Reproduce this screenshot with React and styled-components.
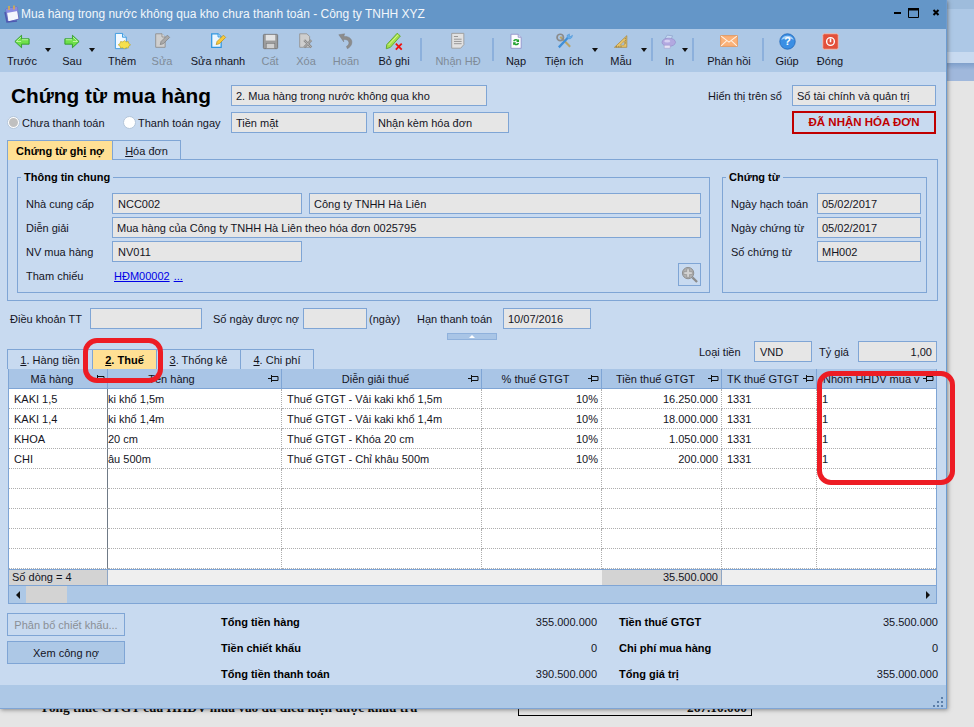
import React from "react";
import styled, { createGlobalStyle } from "styled-components";

const GlobalStyle = createGlobalStyle`
  html, body {
    margin: 0;
    padding: 0;
    background: #e5e5e5;
    overflow: hidden;
  }
  * {
    box-sizing: border-box;
  }
`;

const line = "#7fa5d5";

const Page = styled.div`
  position: relative;
  width: 974px;
  height: 727px;
  overflow: hidden;
  font-family: "Liberation Sans", Arial, sans-serif;
  font-size: 11px;
  color: #14141e;
`;

const Desktop = styled.div`
  display: flex;
  height: 709px;
`;

const Window = styled.div`
  width: 947px;
  height: 709px;
  flex: none;
  display: flex;
  flex-direction: column;
  background: #c8daf0;
  border-right: 1px solid #6c9bd0;
  border-bottom: 1px solid ${line};
  box-shadow: 1px 1px 4px rgba(60, 60, 60, 0.55);
  position: relative;
  z-index: 1;
`;

const SideStrip = styled.div`
  flex: 1;
  display: flex;
  flex-direction: column;
`;

const Strip = styled.div`
  height: ${(p) => p.$h}px;
  background: ${(p) => p.$bg};
`;

const TitleBar = styled.div`
  height: 29px;
  flex: none;
  background: #6496c8;
  display: flex;
  align-items: center;
  padding: 0 6px 1px 3px;
  color: #f2f6fb;
  font-size: 12px;
`;

const TitleText = styled.span`
  flex: 1;
`;

const Toolbar = styled.div`
  height: 43px;
  flex: none;
  background: #adc8e6;
  display: flex;
  padding-left: 4px;
`;

const Tool = styled.div`
  width: ${(p) => p.$w}px;
  margin-left: ${(p) => p.$ml || 0}px;
  flex: none;
  display: flex;
  flex-direction: column;
  align-items: center;
  white-space: nowrap;
  color: ${(p) => (p.$off ? "#7f8b98" : "#14141e")};
`;

const ToolIcon = styled.div`
  height: 24px;
  display: flex;
  align-items: center;
  justify-content: center;
  svg {
    display: block;
  }
`;

const ToolLabel = styled.div`
  line-height: 14px;
  margin-top: 1px;
`;

const Caret = styled.div`
  width: ${(p) => p.$w}px;
  margin-left: ${(p) => p.$ml || 0}px;
  flex: none;
  display: flex;
  justify-content: center;
  padding-top: 19px;
  &::after {
    content: "";
    flex: none;
    width: 0;
    height: 0;
    border-left: 3.5px solid transparent;
    border-right: 3.5px solid transparent;
    border-top: 4px solid #111;
  }
`;

const ToolSep = styled.div`
  width: 2px;
  height: 23px;
  margin-top: 9px;
  margin-left: ${(p) => p.$ml || 0}px;
  flex: none;
  background: #8cb0dc;
`;

const Head = styled.div`
  height: 68px;
  flex: none;
  padding: 13px 10px 0 7px;
  display: flex;
  flex-direction: column;
  gap: 6px;
`;

const HeadRow = styled.div`
  display: flex;
  align-items: center;
  height: 21px;
`;

const DocTitle = styled.h1`
  width: 224px;
  flex: none;
  margin: 0;
  padding-left: 4px;
  font-size: 20.8px;
  line-height: 21px;
  font-weight: 700;
  color: #000;
  white-space: nowrap;
`;

const Radios = styled.div`
  width: 224px;
  flex: none;
  display: flex;
  align-items: center;
`;

const RadioItem = styled.label`
  display: flex;
  align-items: center;
  gap: 2px;
  width: ${(p) => p.$w}px;
  flex: none;
  white-space: nowrap;
`;

const RadioDot = styled.span`
  width: 13px;
  height: 13px;
  border-radius: 50%;
  flex: none;
  background: #fff;
  border: 1px solid #b4c6da;
  display: flex;
  align-items: center;
  justify-content: center;
  &::after {
    content: "";
    display: ${(p) => (p.$on ? "block" : "none")};
    width: 9px;
    height: 9px;
    border-radius: 50%;
    background: #c0c0c0;
  }
`;

const Field = styled.div`
  width: ${(p) => (p.$w ? `${p.$w}px` : "auto")};
  height: 21px;
  flex: ${(p) => (p.$w ? "none" : "1")};
  margin-left: ${(p) => p.$ml || 0}px;
  background: #e6e6e6;
  border: 1px solid ${line};
  padding: 0 4px 0 ${(p) => p.$pl || 4}px;
  line-height: 20px;
  text-align: ${(p) => p.$align || "left"};
  white-space: nowrap;
  overflow: hidden;
`;

const Spacer = styled.div`
  flex: 1;
`;

const Text = styled.span`
  width: ${(p) => (p.$w ? `${p.$w}px` : "auto")};
  margin-left: ${(p) => p.$ml || 0}px;
  flex: none;
  white-space: nowrap;
`;

const Stamp = styled.div`
  width: 144px;
  height: 23px;
  flex: none;
  border: 2px solid #c00000;
  color: #c00000;
  font-weight: 700;
  text-align: center;
  line-height: 19px;
  font-size: 11.5px;
`;

const TabRow = styled.div`
  display: flex;
  padding-left: 7px;
  height: 20px;
  flex: none;
  position: relative;
  z-index: 1;
  margin-bottom: -1px;
`;

const Tab = styled.div`
  width: ${(p) => p.$w}px;
  flex: none;
  height: 20px;
  border: 1px solid ${line};
  border-left-width: ${(p) => (p.$first ? 1 : 0)}px;
  border-bottom: 0;
  background: ${(p) => (p.$on ? "#ffe094" : "transparent")};
  font-weight: ${(p) => (p.$on ? 700 : 400)};
  color: ${(p) => (p.$on ? "#000" : "#14141e")};
  text-align: center;
  line-height: 20px;
  white-space: nowrap;
`;

const Panel = styled.div`
  margin: 0 8px 0 7px;
  height: 142px;
  flex: none;
  border: 1px solid ${line};
  padding: 10px 10px 0 9px;
  display: flex;
  justify-content: space-between;
`;

const Group = styled.fieldset`
  width: ${(p) => p.$w}px;
  min-width: 0;
  min-inline-size: 0;
  height: 123px;
  margin: 0;
  padding: 9px 8px 0 8px;
  border: 1px solid ${line};
  flex: none;
  display: flex;
  flex-direction: column;
  gap: 3px;
`;

const GroupTitle = styled.legend`
  padding: 0 3px;
  margin-left: -5px;
  font-weight: 700;
  line-height: 14px;
  color: #000;
`;

const FormRow = styled.div`
  display: flex;
  align-items: center;
  height: 21px;
`;

const FormLabel = styled.span`
  width: ${(p) => p.$w}px;
  flex: none;
  white-space: nowrap;
`;

const RefLink = styled.a`
  margin-left: 2px;
  color: #0000e6;
  text-decoration: underline;
  margin-right: 2px;
  flex: none;
`;

const ZoomButton = styled.div`
  width: 23px;
  height: 23px;
  border: 1px solid ${line};
  margin-left: auto;
  margin-top: -2px;
  display: flex;
  align-items: center;
  justify-content: center;
`;

const TermsRow = styled.div`
  margin-top: 7px;
  height: 21px;
  flex: none;
  display: flex;
  align-items: center;
  padding-left: 10px;
`;

const Collapser = styled.div`
  width: 50px;
  height: 7px;
  flex: none;
  margin: 4px 0 1px 447px;
  background: #a9c5e6;
  border: 1px solid #8fb1dc;
  display: flex;
  align-items: center;
  justify-content: center;
  &::after {
    content: "";
    border-left: 3px solid transparent;
    border-right: 3px solid transparent;
    border-bottom: 3px solid #fff;
  }
`;

const GridTop = styled.div`
  height: 28px;
  flex: none;
  display: flex;
  align-items: flex-start;
  padding: 0 9px 0 7px;
`;

const GridTabs = styled.div`
  display: flex;
  margin-top: 8px;
`;

const Currency = styled.div`
  margin-left: auto;
  display: flex;
  align-items: center;
`;

const DataGrid = styled.div`
  margin: 0 9px 0 8px;
  height: 235px;
  flex: none;
  border-left: 1px solid ${line};
  border-right: 1px solid ${line};
  border-bottom: 1px solid ${line};
  display: flex;
  flex-direction: column;
`;

const columns = "99px 174px 200px 120px 120px 95px 1fr";

const HeaderRow = styled.div`
  display: grid;
  grid-template-columns: ${columns};
  height: 20px;
  flex: none;
  background: #a9c5e6;
  border-bottom: 1px solid ${line};
`;

const HeaderCell = styled.div`
  display: flex;
  align-items: center;
  justify-content: ${(p) => (p.$left ? "flex-start" : "center")};
  padding: ${(p) => (p.$left ? "1px 16px 0 6px" : `1px ${p.$pr || 12}px 0 0`)};
  border-right: 1px solid ${line};
  position: relative;
  white-space: nowrap;
  overflow: hidden;
  &:last-child {
    border-right: 0;
  }
`;

const PinMark = styled.svg`
  position: absolute;
  right: 2px;
  top: 5px;
`;

const Body = styled.div`
  height: 180px;
  flex: none;
  background: #fff;
  display: flex;
  flex-direction: column;
`;

const Row = styled.div`
  display: grid;
  grid-template-columns: ${columns};
  height: 20px;
  flex: none;
`;

const Cell = styled.div`
  height: 20px;
  padding: 1px ${(p) => (p.$clip ? "4px 0 0" : "3px 0 5px")};
  line-height: 18px;
  text-align: ${(p) => (p.$right ? "right" : "left")};
  border-bottom: 1px dotted #aeaeae;
  border-right: ${(p) => (p.$frozen ? "1px solid #6f7a86" : "1px dotted #aeaeae")};
  white-space: nowrap;
  overflow: hidden;
  &:last-child {
    border-right: 0;
  }
`;

const FooterRow = styled.div`
  display: grid;
  grid-template-columns: ${columns};
  height: 17px;
  flex: none;
  background: #efefef;
  border-top: 1px solid ${line};
  border-bottom: 1px solid ${line};
`;

const FooterCell = styled.div`
  background: ${(p) => (p.$sum ? "#d3d3d3" : "transparent")};
  border-right: 1px solid ${(p) => (p.$sum ? "#8fa6c4" : "transparent")};
  padding: 0 3px;
  line-height: 15px;
  text-align: ${(p) => (p.$right ? "right" : "left")};
  white-space: nowrap;
`;

const ScrollBar = styled.div`
  flex: 1;
  display: flex;
  align-items: center;
  background: #adc8e6;
`;

const ScrollArrow = styled.div`
  width: 17px;
  flex: none;
  display: flex;
  justify-content: center;
  &::after {
    content: "";
    border-top: 4px solid transparent;
    border-bottom: 4px solid transparent;
    ${(p) => (p.$right ? "border-left: 4px solid #111;" : "border-right: 4px solid #111;")}
  }
`;

const ScrollThumb = styled.div`
  width: 41px;
  height: 100%;
  flex: none;
  background: #d3d3d3;
`;

const Bottom = styled.div`
  height: 81px;
  flex: none;
  display: flex;
  padding: 9px 9px 0 7px;
`;

const ButtonColumn = styled.div`
  width: 118px;
  flex: none;
  display: flex;
  flex-direction: column;
  gap: 5px;
`;

const Button = styled.div`
  height: 23px;
  border: 1px solid ${line};
  background: ${(p) => (p.$off ? "transparent" : "#adc8e6")};
  color: ${(p) => (p.$off ? "#8a8f96" : "#14141e")};
  text-align: center;
  line-height: 22px;
  white-space: nowrap;
`;

const Summary = styled.div`
  margin: -4px 0 0 96px;
  display: grid;
  grid-template-columns: 376px 319px;
  grid-auto-rows: 26px;
  column-gap: 22px;
`;

const SummaryItem = styled.div`
  display: flex;
  align-items: center;
  justify-content: space-between;
  strong {
    color: #000;
  }
`;

const StatusBar = styled.div`
  flex: 1;
  background: #adc8e6;
  display: flex;
  justify-content: flex-end;
  align-items: flex-end;
  padding: 0 1px 0 0;
`;

const BehindWindow = styled.div`
  height: 18px;
  display: flex;
  overflow: hidden;
  font-family: "Liberation Serif", "Times New Roman", serif;
  font-size: 13.35px;
  color: #000;
`;

const BehindText = styled.div`
  margin: -9px 0 0 40px;
  width: 478px;
  flex: none;
  font-weight: 700;
  white-space: nowrap;
  line-height: 15px;
`;

const BehindBox = styled.div`
  width: 234px;
  height: 7px;
  flex: none;
  border: 1px solid #000;
  border-top: 0;
  text-align: right;
  padding-right: 4px;
  overflow: hidden;
`;

const BehindValue = styled.div`
  margin-top: -9px;
  line-height: 15px;
  font-weight: 700;
`;

const Annotation = styled.div`
  position: absolute;
  left: ${(p) => p.$x}px;
  top: ${(p) => p.$y}px;
  width: ${(p) => p.$w}px;
  height: ${(p) => p.$h}px;
  border: 5px solid #ed1c24;
  border-radius: 14px;
  z-index: 5;
`;

const AppIcon = () => (
  <svg width="18" height="20" viewBox="0 0 18 20">
    <path d="M3 5 L14 3 L16 15 L5 18 Z" fill="#f4f6fd" stroke="#6a6fc0" />
    <path d="M3 5 L14 3 L14.6 7 L3.7 9 Z" fill="#8a8ae0" />
    <path d="M6 2v4M11 1.5v4" stroke="#e0b040" strokeWidth="1.5" />
    <path d="M2 8 L4 18 L14 17" fill="none" stroke="#4f58b0" strokeWidth="1.5" />
  </svg>
);

const BackIcon = ({ flip }) => (
  <svg width="16" height="15" viewBox="0 0 18 16" style={flip ? { transform: "scaleX(-1)" } : undefined}>
    <path d="M8.5 1 L1 8 L8.5 15 L8.5 11 L17 11 L17 5 L8.5 5 Z" fill="#6fe04a" stroke="#2b9a24" strokeLinejoin="round" />
    <path d="M8 3 L2.6 8 L8 8 M9 6 L16 6" fill="none" stroke="#c4f7a8" />
  </svg>
);

const NewIcon = () => (
  <svg width="19" height="19" viewBox="0 0 20 20">
    <path d="M2.5 1.5 H10 L14 5.5 V17.5 H2.5 Z" fill="#f2f9ff" stroke="#3d9be0" />
    <path d="M10 1.5 V5.5 H14" fill="#bfe0fa" stroke="#3d9be0" />
    <path d="M12 9 L13.5 10.5 L16 10 L16.5 12 L18.5 13.5 L16.5 15 L16 17 L13.5 16.5 L12 18 L10.5 16.5 L8 17 L7.5 15 L5.5 13.5 L7.5 12 L8 10 L10.5 10.5 Z" fill="#f5e04c" stroke="#b9a32a" strokeWidth="0.7" />
  </svg>
);

const EditIcon = ({ off }) => (
  <svg width="18" height="18" viewBox="0 0 20 20">
    <path d="M3 2 H10 L13.5 5.5 V17 H3 Z" fill={off ? "#cfcfcf" : "#eaf6ff"} stroke={off ? "#8e8e8e" : "#2e95e0"} strokeWidth={off ? 1 : 1.4} />
    <path d="M10 2 V5.5 H13.5" fill={off ? "#e6e6e6" : "#bfe0fa"} stroke={off ? "#8e8e8e" : "#2e95e0"} />
    <path d="M8 14 L9 10.5 L16 3.5 L18.5 6 L11.5 13 Z" fill={off ? "#a9a9a9" : "#f7c93e"} stroke={off ? "#808080" : "#b98f1c"} strokeWidth="0.8" />
  </svg>
);

const SaveIcon = () => (
  <svg width="19" height="19" viewBox="0 0 20 20">
    <rect x="2.5" y="2.5" width="15" height="15" rx="1" fill="#9c9c9c" stroke="#777" />
    <rect x="5" y="3" width="10" height="6" fill="#e4e4e4" />
    <rect x="5.5" y="12" width="9" height="5.5" fill="#d0d0d0" stroke="#777" strokeWidth="0.6" />
  </svg>
);

const DeleteIcon = () => (
  <svg width="18" height="18" viewBox="0 0 20 20">
    <path d="M3 2 H11 L14 5 V17 H3 Z" fill="#cecece" stroke="#959595" />
    <path d="M8 9 L16 17 M16 9 L8 17" stroke="#8a8a8a" strokeWidth="2.6" />
    <path d="M8 9 L16 17 M16 9 L8 17" stroke="#c4c4c4" strokeWidth="0.8" />
  </svg>
);

const UndoIcon = () => (
  <svg width="18" height="18" viewBox="0 0 20 20">
    <path d="M2 3 L8.5 2 L7.5 5 C13 4.5 17 7.5 16.5 12 C16.2 15 14 17.5 11.5 18.5 L10.5 16 C12.5 15 13.5 13.2 13.2 11.5 C12.8 9 10.5 8 7 8.5 L7.5 11 Z" fill="#8c8c8c" stroke="#7a7a7a" strokeWidth="0.5" />
  </svg>
);

const CancelIcon = () => (
  <svg width="20" height="20" viewBox="0 0 22 22">
    <path d="M3 15 L14.5 2.5 L18 5.5 L7 18 L2.5 19.5 Z" fill="#a5e04a" stroke="#5ea52a" />
    <path d="M5 15.5 L15.5 4" stroke="#dbf59a" />
    <path d="M13 14 L19.5 20.5 M19.5 14 L13 20.5" stroke="#ee1111" strokeWidth="2" />
  </svg>
);

const InvoiceIcon = () => (
  <svg width="18" height="18" viewBox="0 0 20 20">
    <path d="M3 1.5 H16.5 V14 L13 18 H3 Z" fill="#e2e2e2" stroke="#9b9b9b" />
    <path d="M5.5 5 H10 M5.5 8 H14 M5.5 10.5 H14 M5.5 13 H14" stroke="#8e8e8e" />
  </svg>
);

const ReloadIcon = () => (
  <svg width="17" height="17" viewBox="0 0 20 20">
    <path d="M3.5 1.5 H12 L15.5 5 V18 H3.5 Z" fill="#fbfbff" stroke="#8f8fc8" />
    <path d="M12 1.5 V5 H15.5" fill="#dfe0f5" stroke="#8f8fc8" />
    <path d="M6 9.5 C6.5 6.8 10 6.4 12 8 L13 7 V10.5 H9.5 L10.6 9.4 C9.5 8.6 8 8.8 7.5 10 Z" fill="#1fa12c" />
    <path d="M13 12 C12.5 14.8 9 15.2 7 13.5 L6 14.5 V11 H9.5 L8.4 12.1 C9.5 13 11 12.8 11.5 11.5 Z" fill="#1fa12c" />
  </svg>
);

const ToolsIcon = () => (
  <svg width="17" height="16" viewBox="0 0 24 22">
    <path d="M20 19 L6 5" stroke="#b9a46a" strokeWidth="3" />
    <circle cx="6" cy="6" r="4.5" fill="none" stroke="#8b8b8b" strokeWidth="2.4" />
    <path d="M4 20 L17 6" stroke="#3f8fd8" strokeWidth="3.2" />
    <path d="M16 7 L15.5 3 L19 1 L19 4 L21.5 5 L23 2.5 C23.5 6 21 8.5 18 8 Z" fill="#69aee8" stroke="#3f8fd8" strokeWidth="0.6" />
  </svg>
);

const RulerIcon = () => (
  <svg width="16" height="15" viewBox="0 0 22 20">
    <path d="M2 18 L19 2 V18 Z" fill="#e9c46a" stroke="#a8853a" />
    <path d="M10 15 L15.5 9.5 V15 Z" fill="#adc8e6" stroke="#a8853a" strokeWidth="0.7" />
    <path d="M17 5v2M17 8v2M17 11v2M5 16v2M8 16v2M11 16v2" stroke="#6e5a22" strokeWidth="0.8" />
  </svg>
);

const PrinterIcon = () => (
  <svg width="17" height="15" viewBox="0 0 22 20">
    <path d="M5 6 L8 1.5 L15 2.5 L13 7 Z" fill="#c7dbf2" stroke="#7f8fc0" strokeWidth="0.7" />
    <ellipse cx="10" cy="11" rx="9" ry="5.5" fill="#b2a8e0" stroke="#8d83c2" strokeWidth="0.7" />
    <ellipse cx="8" cy="9.5" rx="4" ry="1.8" fill="#d6d0f2" />
    <path d="M4 15 H12 V19 H4 Z" fill="#e6e3f5" stroke="#9a92c8" strokeWidth="0.6" />
  </svg>
);

const MailIcon = () => (
  <svg width="18" height="14" viewBox="0 0 24 18">
    <rect x="1" y="2" width="22" height="14" fill="#fbb27a" stroke="#f08a3a" />
    <path d="M1.5 2.5 L12 10.5 L22.5 2.5 M1.5 15.5 L9 8.5 M22.5 15.5 L15 8.5" fill="none" stroke="#fff3e6" strokeWidth="1.4" />
  </svg>
);

const HelpIcon = () => (
  <svg width="17" height="17" viewBox="0 0 22 22">
    <circle cx="11" cy="11" r="10" fill="#3b8fe4" stroke="#1f66b8" />
    <path d="M3 9 A8.5 8 0 0 1 19 9 C15 6.5 8 6.5 3 9 Z" fill="#a9d2f7" />
    <text x="11" y="16" textAnchor="middle" fontFamily="Liberation Sans, sans-serif" fontWeight="700" fontSize="14" fill="#fff">?</text>
  </svg>
);

const CloseIcon = () => (
  <svg width="17" height="17" viewBox="0 0 22 22">
    <rect x="1" y="1" width="20" height="20" rx="2" fill="#e2503a" stroke="#f7c4b4" />
    <circle cx="11" cy="11" r="5" fill="none" stroke="#fff" strokeWidth="1.8" />
    <path d="M11 7 V12" stroke="#fff" strokeWidth="2" />
  </svg>
);

const MagnifierIcon = () => (
  <svg width="17" height="17" viewBox="0 0 18 18">
    <circle cx="7.5" cy="7.5" r="6" fill="#b0b0b0" stroke="#8c8c8c" />
    <path d="M12 12 L17 17" stroke="#8c8c8c" strokeWidth="2.4" />
    <path d="M3 6 H6 V3 H9 V6 H12 V9 H9 V12 H6 V9 H3 Z" fill="#d2d2d2" stroke="#8c8c8c" strokeWidth="0.6" />
  </svg>
);

const WindowButtons = () => (
  <svg width="46" height="14" viewBox="0 0 46 14">
    <rect x="0" y="5" width="7" height="2" fill="#000" />
    <path d="M14.5 1.5 H24.5 V10.5 H14.5 Z" fill="none" stroke="#000" />
    <rect x="14" y="1" width="11" height="2.5" fill="#000" />
    <path d="M39.5 3 L44.5 8 M44.5 3 L39.5 8" stroke="#000" strokeWidth="2" />
  </svg>
);

const Pin = () => (
  <PinMark width="11" height="9" viewBox="0 0 11 9">
    <path d="M0 4.5 H3 M3.5 1 V8 M3.5 2.5 H10 V6.5 H3.5" fill="none" stroke="#111" />
  </PinMark>
);

const Grip = () => (
  <svg width="12" height="11" viewBox="0 0 12 11">
    <path d="M8 0h2v2H8zM4 4h2v2H4zM8 4h2v2H8zM0 8h2v2H0zM4 8h2v2H4zM8 8h2v2H8z" fill="#5d7fa8" />
  </svg>
);

const Tb = ({ w, ml, off, label, children }) => (
  <Tool $w={w} $ml={ml} $off={off}>
    <ToolIcon>{children}</ToolIcon>
    <ToolLabel>{label}</ToolLabel>
  </Tool>
);

const heads = ["Mã hàng", "Tên hàng", "Diễn giải thuế", "% thuế GTGT", "Tiền thuế GTGT", "TK thuế GTGT", "Nhóm HHDV mua v"];

const rows = [
  ["KAKI 1,5", "ki khổ 1,5m", "Thuế GTGT - Vải kaki khổ 1,5m", "10%", "16.250.000", "1331", "1"],
  ["KAKI 1,4", "ki khổ 1,4m", "Thuế GTGT - Vải kaki khổ 1,4m", "10%", "18.000.000", "1331", "1"],
  ["KHOA", "20 cm", "Thuế GTGT - Khóa 20 cm", "10%", "1.050.000", "1331", "1"],
  ["CHI", "âu 500m", "Thuế GTGT - Chỉ khâu 500m", "10%", "200.000", "1331", "1"],
  ["", "", "", "", "", "", ""],
  ["", "", "", "", "", "", ""],
  ["", "", "", "", "", "", ""],
  ["", "", "", "", "", "", ""],
  ["", "", "", "", "", "", ""],
];

const App = () => {
  return (
    <Page>
      <GlobalStyle />
      <Desktop>
        <Window>
          <TitleBar>
            <AppIcon />
            <TitleText>Mua hàng trong nước không qua kho chưa thanh toán - Công ty TNHH XYZ</TitleText>
            <WindowButtons />
          </TitleBar>

          <Toolbar>
            <Tb w={36} label="Trước"><BackIcon /></Tb>
            <Caret $w={16} />
            <Tb w={32} label="Sau"><BackIcon flip /></Tb>
            <Caret $w={8} />
            <Tb w={36} ml={8} label="Thêm"><NewIcon /></Tb>
            <Tb w={44} off label="Sửa"><EditIcon off /></Tb>
            <Tb w={68} label="Sửa nhanh"><EditIcon /></Tb>
            <Tb w={36} off label="Cất"><SaveIcon /></Tb>
            <Tb w={36} off label="Xóa"><DeleteIcon /></Tb>
            <Tb w={44} off label="Hoãn"><UndoIcon /></Tb>
            <Tb w={52} label="Bỏ ghi"><CancelIcon /></Tb>
            <ToolSep />
            <Tb w={68} ml={2} off label="Nhận HĐ"><InvoiceIcon /></Tb>
            <ToolSep />
            <Tb w={44} label="Nạp"><ReloadIcon /></Tb>
            <Tb w={52} label="Tiện ích"><ToolsIcon /></Tb>
            <Caret $w={8} $ml={1} />
            <Tb w={38} ml={3} label="Mẫu"><RulerIcon /></Tb>
            <Caret $w={8} />
            <ToolSep $ml={3} />
            <Tb w={25} ml={4} label="In"><PrinterIcon /></Tb>
            <Caret $w={6} />
            <ToolSep $ml={4} />
            <Tb w={66} ml={2} label="Phản hồi"><MailIcon /></Tb>
            <ToolSep />
            <Tb w={46} label="Giúp"><HelpIcon /></Tb>
            <Tb w={40} label="Đóng"><CloseIcon /></Tb>
          </Toolbar>

          <Head>
            <HeadRow>
              <DocTitle>Chứng từ mua hàng</DocTitle>
              <Field $w={256}>2. Mua hàng trong nước không qua kho</Field>
              <Spacer />
              <Text $w={84}>Hiển thị trên sổ</Text>
              <Field $w={144}>Sổ tài chính và quản trị</Field>
            </HeadRow>
            <HeadRow>
              <Radios>
                <RadioItem $w={116}>
                  <RadioDot $on />
                  Chưa thanh toán
                </RadioItem>
                <RadioItem $w={100}>
                  <RadioDot />
                  Thanh toán ngay
                </RadioItem>
              </Radios>
              <Field $w={136}>Tiền mặt</Field>
              <Field $w={136} $ml={6}>Nhận kèm hóa đơn</Field>
              <Spacer />
              <Stamp>ĐÃ NHẬN HÓA ĐƠN</Stamp>
            </HeadRow>
          </Head>

          <TabRow>
            <Tab $w={106} $on $first>Chứng từ gh<u>i</u> nợ</Tab>
            <Tab $w={68}><u>H</u>óa đơn</Tab>
          </TabRow>
          <Panel>
            <Group $w={693}>
              <GroupTitle>Thông tin chung</GroupTitle>
              <FormRow>
                <FormLabel $w={86}>Nhà cung cấp</FormLabel>
                <Field $w={190} $pl={5}>NCC002</Field>
                <Field $ml={7}>Công ty TNHH Hà Liên</Field>
              </FormRow>
              <FormRow>
                <FormLabel $w={86}>Diễn giải</FormLabel>
                <Field>Mua hàng của Công ty TNHH Hà Liên theo hóa đơn 0025795</Field>
              </FormRow>
              <FormRow>
                <FormLabel $w={86}>NV mua hàng</FormLabel>
                <Field $w={190} $pl={5}>NV011</Field>
              </FormRow>
              <FormRow>
                <FormLabel $w={86}>Tham chiếu</FormLabel>
                <RefLink>HĐM00002</RefLink>
                <RefLink>...</RefLink>
                <ZoomButton><MagnifierIcon /></ZoomButton>
              </FormRow>
            </Group>
            <Group $w={205}>
              <GroupTitle>Chứng từ</GroupTitle>
              <FormRow>
                <FormLabel $w={86}>Ngày hạch toán</FormLabel>
                <Field $w={104}>05/02/2017</Field>
              </FormRow>
              <FormRow>
                <FormLabel $w={86}>Ngày chứng từ</FormLabel>
                <Field $w={104}>05/02/2017</Field>
              </FormRow>
              <FormRow>
                <FormLabel $w={86}>Số chứng từ</FormLabel>
                <Field $w={104}>MH002</Field>
              </FormRow>
            </Group>
          </Panel>

          <TermsRow>
            <Text $w={80}>Điều khoản TT</Text>
            <Field $w={112} />
            <Text $ml={11} $w={90}>Số ngày được nợ</Text>
            <Field $w={64} />
            <Text $ml={2} $w={48}>(ngày)</Text>
            <Text $w={86}>Hạn thanh toán</Text>
            <Field $w={88}>10/07/2016</Field>
          </TermsRow>
          <Collapser />

          <GridTop>
            <GridTabs>
              <Tab $w={86} $first><u>1</u>. Hàng tiền</Tab>
              <Tab $w={64} $on><u>2</u>. Thuế</Tab>
              <Tab $w={84}><u>3</u>. Thống kê</Tab>
              <Tab $w={73}><u>4</u>. Chi phí</Tab>
            </GridTabs>
            <Currency>
              <Text $w={55}>Loại tiền</Text>
              <Field $w={58} $pl={5}>VND</Field>
              <Text $ml={7} $w={39}>Tỷ giá</Text>
              <Field $w={79} $align="right">1,00</Field>
            </Currency>
          </GridTop>

          <DataGrid>
            <HeaderRow>
              {heads.map((h, i) => (
                <HeaderCell key={h} $left={i === 6} $pr={i === 1 ? 46 : 12}>
                  {h}
                  <Pin />
                </HeaderCell>
              ))}
            </HeaderRow>
            <Body>
              {rows.map((r, i) => (
                <Row key={i}>
                  {r.map((c, j) => (
                    <Cell key={j} $frozen={j === 0} $clip={j === 1} $right={j === 3 || j === 4}>
                      {c}
                    </Cell>
                  ))}
                </Row>
              ))}
            </Body>
            <FooterRow>
              <FooterCell $sum>Số dòng = 4</FooterCell>
              <FooterCell />
              <FooterCell />
              <FooterCell />
              <FooterCell $sum $right>35.500.000</FooterCell>
              <FooterCell />
              <FooterCell />
            </FooterRow>
            <ScrollBar>
              <ScrollArrow />
              <ScrollThumb />
              <Spacer />
              <ScrollArrow $right />
            </ScrollBar>
          </DataGrid>

          <Bottom>
            <ButtonColumn>
              <Button $off>Phân bổ chiết khấu...</Button>
              <Button>Xem công nợ</Button>
            </ButtonColumn>
            <Summary>
              <SummaryItem><strong>Tổng tiền hàng</strong><span>355.000.000</span></SummaryItem>
              <SummaryItem><strong>Tiền thuế GTGT</strong><span>35.500.000</span></SummaryItem>
              <SummaryItem><strong>Tiền chiết khấu</strong><span>0</span></SummaryItem>
              <SummaryItem><strong>Chi phí mua hàng</strong><span>0</span></SummaryItem>
              <SummaryItem><strong>Tổng tiền thanh toán</strong><span>390.500.000</span></SummaryItem>
              <SummaryItem><strong>Tổng giá trị</strong><span>355.000.000</span></SummaryItem>
            </Summary>
          </Bottom>

          <StatusBar><Grip /></StatusBar>
        </Window>
        <SideStrip>
          <Strip $h={9} $bg="#9ebcdc" />
          <Strip $h={43} $bg="#adc8e6" />
          <Strip $h={11} $bg="#c8daf0" />
          <Strip $h={18} $bg="linear-gradient(#7f9fcb, #a0b8dc 40%)" />
        </SideStrip>
      </Desktop>
      <BehindWindow>
        <BehindText>Tổng thuế GTGT của HHDV mua vào đủ điều kiện được khấu trừ</BehindText>
        <BehindBox>
          <BehindValue>267.10.000</BehindValue>
        </BehindBox>
      </BehindWindow>

      <Annotation $x={83} $y={338} $w={80} $h={45} />
      <Annotation $x={817} $y={371} $w={138} $h={114} />
    </Page>
  );
};

export default App;
